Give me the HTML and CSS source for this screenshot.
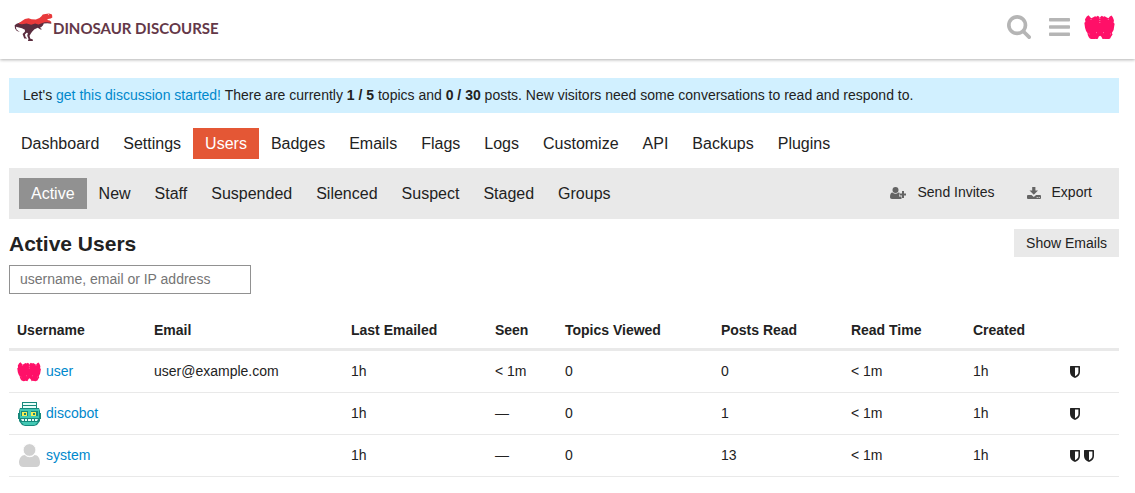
FILE: index.html
```html
<!DOCTYPE html>
<html lang="en">
<head>
<meta charset="utf-8">
<title>Active Users - Dinosaur Discourse</title>
<link rel="stylesheet" href="styles.css">
</head>
<body>
<svg class="defs" aria-hidden="true">
  <symbol id="shield" viewBox="0 0 10 12"><path fill-rule="evenodd" d="M.6 0h8.800q.6 0 .6.600v5.400c0 3-2 4.800-5 6C2 10.800 0 9 0 6V.6Q0 0 .6 0zM5 1.600v8.700C7.400 9 8.400 7.700 8.400 6V1.600z"/></symbol>
  <symbol id="moth" viewBox="0 0 93 69"><path d="M1 22l3-2-1-8 5-8 5-4 4 5 4 4 6-3 5-3 4 2 4-3 4 3 2 3 2-3 4-3 4 3 4-2 5 3 6 3 4-5 5-3 4 6 3 8-1 7 3 3-1 6-2 12-5 9 2 4-4 6-3 6-7 3-11-2-4 2-1-4-3-5-3-2-4 2-2 5-3 4-5-2-8 2-8-3-3-4-3-6-1-6-4-6-3-9z"/><path d="M46 9v18M20 12l2 4M71 12l-2 4M35 50l3 2M58 50l-3 2M14 54l3 2M78 54l-3 2" fill="none" stroke="#fff" stroke-width="2" stroke-dasharray="2 4"/></symbol>
</svg>
<header class="site-header">
  <a class="logo" href="#" aria-label="Dinosaur Discourse">
    <svg class="dino" viewBox="42 36 118 86" aria-hidden="true">
      <path fill="#5b2d3f" d="M44 72L50 68 62 63 80 62 96 60 110 62 122 58 140 56 154 62 155 68 143 66 132 67 130 72 124 78 120 80 127 84 122 85 114 80 104 84 98 90 94 96 89 104 91 112 99 115V120H84L86 114 82 104 84 96 80 95 75 100 77 108 82 112H73L68 99 75 92 75 86 66 81 54 78 48 77 49 84 56 90 60 93 50 89 45 82z"/>
      <path fill="#e8393b" d="M55 68L66 59 75 53 86 51 95 54 108 55 119 50 125 45 129 40 137 38 148 37 157 40 158 49 153 52 145 53 142 56 150 58 155 62 154 65 143 63 135 63 126 66 116 70 106 67 94 71 80 67 66 69z"/>
      <path fill="#fff" d="M144 40l4-1v3z"/>
    </svg><span class="wordmark">DINOSAUR DISCOURSE</span>
  </a>
  <div class="header-icons">
    <button class="icon-button" aria-label="Search"><svg class="search" viewBox="0 128 1664 1664"><path d="M1152 832q0-185-131.500-316.500t-316.500-131.500-316.500 131.500-131.500 316.500 131.500 316.500 316.500 131.500 316.500-131.500 131.500-316.500zm512 832q0 52-38 90t-90 38q-54 0-90-38l-343-342q-179 124-399 124-143 0-273.500-55.500t-225-150-150-225-55.500-273.500 55.500-273.500 150-225 225-150 273.500-55.500 273.500 55.500 225 150 150 225 55.500 273.500q0 220-124 399l343 343q37 37 37 90z"/></svg></button>
    <button class="icon-button" aria-label="Menu"><svg class="bars" viewBox="0 0 21 18"><rect width="21" height="3.600" rx=".8"/><rect y="7.200" width="21" height="3.600" rx=".8"/><rect y="14.400" width="21" height="3.600" rx=".8"/></svg></button>
    <button class="icon-button" aria-label="Your account"><svg class="account"><use href="#moth"/></svg></button>
  </div>
</header>
<main class="wrap">
  <div class="notice">Let's <a href="#">get this discussion started!</a> There are currently <strong>1 / 5</strong> topics and <strong>0 / 30</strong> posts. New visitors need some conversations to read and respond to.</div>
  <nav class="pills" aria-label="Admin">
    <a href="#">Dashboard</a><a href="#">Settings</a><a href="#" class="current">Users</a><a href="#">Badges</a><a href="#">Emails</a><a href="#">Flags</a><a href="#">Logs</a><a href="#">Customize</a><a href="#">API</a><a href="#">Backups</a><a href="#">Plugins</a>
  </nav>
  <div class="controls">
    <nav class="pills sub" aria-label="Users">
      <a href="#" class="current">Active</a><a href="#">New</a><a href="#">Staff</a><a href="#">Suspended</a><a href="#">Silenced</a><a href="#">Suspect</a><a href="#">Staged</a><a href="#">Groups</a>
    </nav>
    <div class="actions">
      <button class="action"><svg width="16" height="12" viewBox="0 0 16 12" aria-hidden="true"><circle cx="5.500" cy="3" r="3"/><path d="M2.500 5.500c2 1.600 4 1.600 6 0 .8 0 1.300.6 1.500 1H9v3h2.500V12H2C.7 12 0 11.300 0 10c0-2.500.8-4.500 2.500-4.500zM12 4h2v2.500h2v2h-2V11h-2V8.500H9.500v-2H12z"/></svg>Send Invites</button>
      <button class="action"><svg width="14" height="12" viewBox="0 0 14 12" aria-hidden="true"><path fill-rule="evenodd" d="M5.200 0h3.200v3.500H11L6.800 7.800 2.500 3.500h2.700zM1 8h3.500l2.300 2 2.300-2H13q1 0 1 1v2q0 1-1 1H1q-1 0-1-1V9q0-1 1-1zm8.700 2v1h1v-1zm2 0v1h1v-1z"/></svg>Export</button>
    </div>
  </div>
  <div class="title-row">
    <h1>Active Users</h1>
    <button class="show-emails">Show Emails</button>
  </div>
  <input class="filter" type="text" aria-label="Filter users" placeholder="username, email or IP address">
  <table class="users">
    <colgroup><col class="c-name"><col class="c-email"><col class="c-mailed"><col class="c-seen"><col class="c-topics"><col class="c-posts"><col class="c-time"><col class="c-created"><col></colgroup>
    <thead>
      <tr><th>Username</th><th>Email</th><th>Last Emailed</th><th>Seen</th><th>Topics Viewed</th><th>Posts Read</th><th>Read Time</th><th>Created</th><th></th></tr>
    </thead>
    <tbody>
      <tr>
        <td><a class="user" href="#"><svg class="avatar pink" aria-hidden="true"><use href="#moth"/></svg>user</a></td>
        <td>user@example.com</td><td>1h</td><td>&lt; 1m</td><td>0</td><td>0</td><td>&lt; 1m</td><td>1h</td>
        <td><span class="shields"><svg><use href="#shield"/></svg></span></td>
      </tr>
      <tr>
        <td><a class="user" href="#"><svg class="avatar" viewBox="0 0 25 25" aria-hidden="true">
          <path fill="#16897c" d="M5 1h15v6h2l1 3v2h1v6h-1v2l-3 4-3 1H8l-3-1-3-4v-2H1v-6h1v-2l1-3h2z"/>
          <path fill="#43c8b4" d="M3 8h19v9l-1 4-3 3H7l-3-3-1-4z"/>
          <path fill="#e9fffa" d="M6 2h13v2H6zM6 5h13v2H6z"/>
          <path fill="#16897c" d="M4 10h7v5H4zM14 10h7v5h-7zM3 17h19v4H3z"/>
          <path fill="#f5ee55" d="M5 11h5v4H5zM14 11h5v4h-5z"/>
          <path fill="#16897c" d="M7 12h2v2H7zM16 12h2v2h-2z"/>
          <path fill="#e9fffa" d="M4 18h3v2H5zM8 18h2v2H8zM11 18h3v2h-3zM15 18h2v2h-2zM18 18h3l-1 2h-2z"/>
        </svg>discobot</a></td>
        <td></td><td>1h</td><td>—</td><td>0</td><td>1</td><td>&lt; 1m</td><td>1h</td>
        <td><span class="shields"><svg><use href="#shield"/></svg></span></td>
      </tr>
      <tr>
        <td><a class="user" href="#"><svg class="avatar" viewBox="0 0 25 25" aria-hidden="true"><path fill="#d0d0d0" d="M8 12c2.500 3 7 3 9.500 0C21 12 23 15.500 23 19.500 23 22.500 21.500 24 19 24H6.500C4 24 2 22.500 2 19.500 2 15.500 4.500 12 8 12z"/><circle cx="12.500" cy="7" r="6.300" fill="#d0d0d0" stroke="#fff" stroke-width=".8"/></svg>system</a></td>
        <td></td><td>1h</td><td>—</td><td>0</td><td>13</td><td>&lt; 1m</td><td>1h</td>
        <td><span class="shields"><svg><use href="#shield"/></svg><svg><use href="#shield"/></svg></span></td>
      </tr>
    </tbody>
  </table>
</main>
</body>
</html>
```
FILE: styles.css
```css
* { box-sizing: border-box; }
body {
  margin: 0;
  color: #222;
  background: #fff;
  font: 14px/19px "Liberation Sans", Arial, sans-serif;
}
a { color: #0088cc; text-decoration: none; }
button { border: 0; padding: 0; color: #222; background: none; font: inherit; cursor: pointer; }
svg { display: block; flex: none; }
.defs { position: absolute; width: 0; height: 0; }

.site-header {
  display: flex;
  justify-content: space-between;
  align-items: center;
  height: 59px;
  padding: 0 19px 5px 14px;
  box-shadow: 0 1px 3px rgba(0, 0, 0, 0.3);
}
.logo { display: flex; align-items: center; }
.dino { width: 39px; height: 29px; }
.wordmark { padding-top: 2px; color: #643848; font: 700 15px/24px Lato, sans-serif; }
.header-icons { display: flex; align-items: center; gap: 18px; fill: #b5b5b5; }
.search { width: 24px; height: 24px; }
.bars { width: 21px; height: 18px; }
.account { width: 32px; height: 24px; fill: #ff1068; }
.icon-button + .icon-button:last-child { margin-left: -4px; }

.wrap { padding: 19px 16px 16px 9px; }
.notice { padding: 8px 14px; background: #d1f0ff; }

.pills { display: table; margin: 15px 0 9px; font-size: 16px; }
.pills a { display: table-cell; padding: 6px 12px; color: #222; }
.pills .current { color: #fff; background: #e45735; }
.pills.sub { margin: 0; }
.pills.sub .current { background: #919191; }

.controls {
  display: flex;
  justify-content: space-between;
  padding: 10px;
  background: #e9e9e9;
}
.actions { display: flex; gap: 32px; padding: 5px 17px 0 0; align-items: flex-start; }
.action { display: flex; align-items: center; gap: 11px; }
.action svg { fill: #646464; }

.title-row { display: flex; justify-content: space-between; align-items: center; margin-top: 10px; }
h1 { margin: 0; padding-top: 2px; font-size: 21px; line-height: 26px; }
.show-emails { height: 28px; padding: 0 12px; background: #e9e9e9; }
.filter {
  display: block;
  width: 242px;
  height: 29px;
  margin: 8px 0 17px;
  padding: 0 10px 2px;
  border: 1px solid #919191;
  color: #222;
  font: inherit;
}
.filter::placeholder { color: #757575; opacity: 1; }

.users { width: 100%; table-layout: fixed; border-collapse: separate; border-spacing: 0; }
.users th { height: 40px; padding: 2px 8px 0; text-align: left; border-bottom: 3px solid #e9e9e9; }
.users td { height: 42px; padding: 0 8px; border-bottom: 1px solid #e9e9e9; }
.c-name { width: 12.340%; }
.c-email { width: 17.750%; }
.c-mailed { width: 12.970%; }
.c-seen { width: 6.310%; }
.c-topics { width: 14.050%; }
.c-posts { width: 11.710%; }
.c-time { width: 10.990%; }
.c-created { width: 8.740%; }
.user { display: flex; align-items: center; gap: 4px; }
.avatar { width: 25px; height: 25px; }
.pink { fill: #ff1068; }
.shields { display: flex; gap: 4px; }
.shields svg { width: 10px; height: 12px; fill: #222; }
```
